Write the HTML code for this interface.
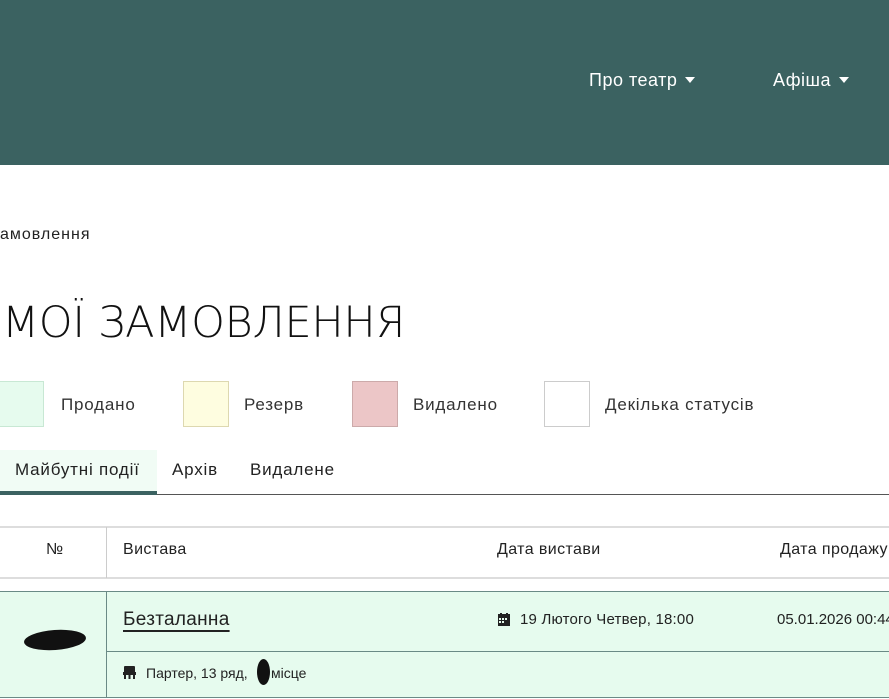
<!DOCTYPE html>
<html><head><meta charset="utf-8">
<style>
*{margin:0;padding:0;box-sizing:border-box}
body{width:889px;height:699px;overflow:hidden;background:#fff;font-family:"Liberation Sans",sans-serif;color:#222;position:relative}
.hdr{position:absolute;left:0;top:0;width:889px;height:165px;background:#3b6261}
.nav{position:absolute;top:70px;color:#fff;font-size:18px;letter-spacing:0.5px}
.tri{display:inline-block;width:0;height:0;border-left:5px solid transparent;border-right:5px solid transparent;border-top:6px solid #fff;vertical-align:3px;margin-left:8px}
.abs{position:absolute}
.bc{left:0;top:226px;font-size:16px;letter-spacing:1px}
.title{left:2px;top:298px;font-family:"DejaVu Sans",sans-serif;font-weight:200;font-size:43px;letter-spacing:-0.3px;color:#111}
.sw{position:absolute;top:381px;width:46px;height:46px;border:1px solid #ccc}
.lg{position:absolute;top:395px;font-size:17px;letter-spacing:0.8px;color:#333}
.tab{position:absolute;top:460px;font-size:17px;letter-spacing:0.8px;color:#222}
.th{position:absolute;top:541px;font-size:16px;letter-spacing:0.4px}
</style></head><body>
<div class="hdr"></div>
<div class="nav" style="left:589px">Про театр<span class="tri"></span></div>
<div class="nav" style="left:773px">Афіша<span class="tri"></span></div>
<div class="abs bc">амовлення</div>
<div class="abs title">МОЇ ЗАМОВЛЕННЯ</div>
<div class="sw" style="left:-2px;background:#e6fbee;border-color:#c8e8d4"></div><div class="lg" style="left:61px">Продано</div>
<div class="sw" style="left:183px;background:#fefde0;border-color:#ddd8b0"></div><div class="lg" style="left:244px">Резерв</div>
<div class="sw" style="left:352px;background:#ecc6c7;border-color:#caa"></div><div class="lg" style="left:413px">Видалено</div>
<div class="sw" style="left:544px;background:#fff"></div><div class="lg" style="left:605px">Декілька статусів</div>
<div class="abs" style="left:0;top:450px;width:157px;height:44px;background:#f1fcf5"></div>
<div class="tab" style="left:15px">Майбутні події</div>
<div class="tab" style="left:172px">Архів</div>
<div class="tab" style="left:250px">Видалене</div>
<div class="abs" style="left:0;top:494px;width:889px;height:1px;background:#555"></div>
<div class="abs" style="left:0;top:491px;width:157px;height:4px;background:#3b6261"></div>
<div class="abs" style="left:0;top:526px;width:889px;height:2px;background:#ddd"></div>
<div class="abs" style="left:0;top:577px;width:889px;height:2px;background:#ddd"></div>
<div class="abs" style="left:106px;top:527px;width:1px;height:51px;background:#ccc"></div>
<div class="th" style="left:46px">№</div>
<div class="th" style="left:123px">Вистава</div>
<div class="th" style="left:497px">Дата вистави</div>
<div class="th" style="left:780px;white-space:nowrap">Дата продажу</div>
<div class="abs" style="left:0;top:591px;width:889px;height:107px;background:#e6fbee;border-top:1px solid #6a8a86;border-bottom:1px solid #6a8a86"></div>
<div class="abs" style="left:106px;top:592px;width:1px;height:106px;background:#6a8a86"></div>
<div class="abs" style="left:107px;top:651px;width:782px;height:1px;background:#6a8a86"></div>
<div class="abs" style="left:24px;top:630px;width:62px;height:20px;background:#111;border-radius:50%;transform:rotate(-4deg)"></div>
<div class="abs" style="left:123px;top:609px;font-size:19px;letter-spacing:0.3px;text-decoration:underline;text-underline-offset:5px;text-decoration-thickness:2px">Безталанна</div>
<svg class="abs" style="left:498px;top:613px" width="12" height="13" viewBox="0 0 12 13"><rect x="0" y="1" width="12" height="12" fill="#222"/><rect x="2" y="0" width="2" height="3" fill="#222"/><rect x="8" y="0" width="2" height="3" fill="#222"/><g fill="#e6fbee"><rect x="1" y="5" width="2" height="2"/><rect x="4" y="5" width="2" height="2"/><rect x="7" y="5" width="2" height="2"/><rect x="1" y="8" width="2" height="2"/><rect x="4" y="8" width="2" height="2"/></g></svg>
<div class="abs" style="left:520px;top:611px;font-size:15px;letter-spacing:0.2px">19 Лютого Четвер, 18:00</div>
<div class="abs" style="left:777px;top:611px;font-size:15px;white-space:nowrap">05.01.2026 00:44</div>
<svg class="abs" style="left:123px;top:666px" width="13" height="13" viewBox="0 0 13 13"><rect x="1" y="0" width="11" height="7" rx="1" fill="#222"/><rect x="0" y="6" width="13" height="3" fill="#222"/><rect x="1" y="9" width="2" height="4" fill="#222"/><rect x="5.5" y="9" width="2" height="4" fill="#222"/><rect x="10" y="9" width="2" height="4" fill="#222"/></svg>
<div class="abs" style="left:146px;top:665px;font-size:14px">Партер, 13 ряд,</div>
<div class="abs" style="left:271px;top:665px;font-size:14px">місце</div>
<div class="abs" style="left:257px;top:659px;width:13px;height:26px;background:#111;border-radius:50%"></div>
</body></html>
